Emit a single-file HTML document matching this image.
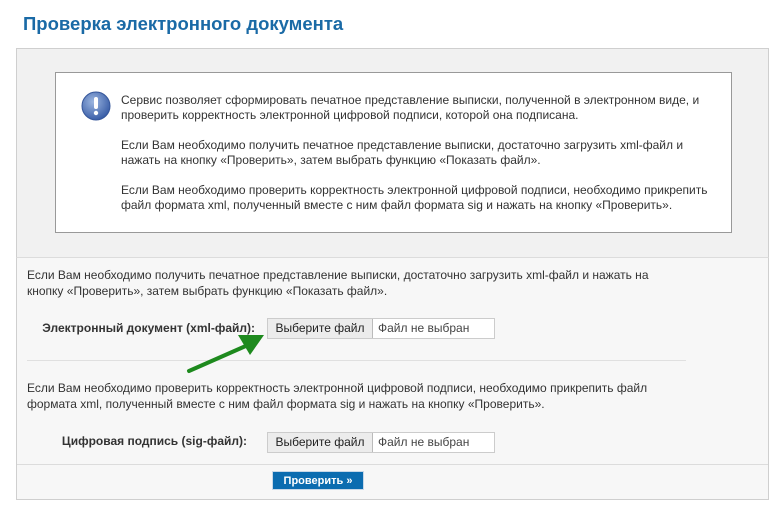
<!DOCTYPE html>
<html><head><meta charset="utf-8"><style>
body{margin:0;width:781px;height:529px;background:#fff;font-family:"Liberation Sans",Arial,sans-serif;font-size:12px;color:#333;position:relative;overflow:hidden}
.a{position:absolute;white-space:nowrap}
h1{position:absolute;left:23px;top:13px;margin:0;font-size:18.5px;font-weight:bold;color:#1a6aa6}
.panel{position:absolute;left:16px;top:48px;width:753px;height:452px;background:#f7f7f7;border:1px solid #cfcfcf;box-sizing:border-box}
.top{position:absolute;left:16px;top:48px;width:753px;height:210px;background:#f1f1f1;border:1px solid #cfcfcf;border-bottom:1px solid #dcdcdc;box-sizing:border-box}
.info{position:absolute;left:55px;top:72px;width:677px;height:161px;background:#fff;border:1px solid #999;box-sizing:border-box}
.fi{position:absolute;left:267px;width:228px;height:21px;border:1px solid #ccc;background:#fff;box-sizing:border-box;font-size:12px}
.fi b{position:absolute;left:0;top:0;width:104px;height:19px;background:#ececec;border-right:1px solid #bbb;font-weight:normal;line-height:19px;text-align:center;color:#222}
.fi span{position:absolute;left:110px;top:0;line-height:19px;color:#444}
.lbl{position:absolute;font-weight:bold;color:#333;text-align:right;white-space:nowrap}
</style></head><body>
<h1>Проверка электронного документа</h1>
<div class="panel"></div>
<div class="top"></div>
<div class="info"></div>
<svg class="a" style="left:81px;top:91px" width="30" height="30" viewBox="0 0 30 30"><defs><radialGradient id="g" cx="40%" cy="35%" r="65%"><stop offset="0" stop-color="#9cb6e0"/><stop offset="1" stop-color="#3b5fa8"/></radialGradient></defs><circle cx="15" cy="15" r="14" fill="url(#g)" stroke="#35569a"/><rect x="13" y="6" width="4" height="12" rx="2" fill="#fff"/><circle cx="15" cy="22" r="2.2" fill="#fff"/></svg>
<div class="a" style="left:121px;top:93px;line-height:15px">Сервис позволяет сформировать печатное представление выписки, полученной в электронном виде, и<br>проверить корректность электронной цифровой подписи, которой она подписана.</div>
<div class="a" style="left:121px;top:138px;line-height:15px">Если Вам необходимо получить печатное представление выписки, достаточно загрузить xml-файл и<br>нажать на кнопку «Проверить», затем выбрать функцию «Показать файл».</div>
<div class="a" style="left:121px;top:183px;line-height:15px">Если Вам необходимо проверить корректность электронной цифровой подписи, необходимо прикрепить<br>файл формата xml, полученный вместе с ним файл формата sig и нажать на кнопку «Проверить».</div>
<div class="a" style="left:27px;top:267px;line-height:16px">Если Вам необходимо получить печатное представление выписки, достаточно загрузить xml-файл и нажать на<br>кнопку «Проверить», затем выбрать функцию «Показать файл».</div>
<div class="lbl" style="right:526px;top:321px">Электронный документ (xml-файл):</div>
<div class="fi" style="top:318px"><b>Выберите файл</b><span>Файл не выбран</span></div>
<div class="a" style="left:27px;top:360px;width:659px;height:1px;background:#e0e0e0"></div>
<div class="a" style="left:27px;top:380px;line-height:16px">Если Вам необходимо проверить корректность электронной цифровой подписи, необходимо прикрепить файл<br>формата xml, полученный вместе с ним файл формата sig и нажать на кнопку «Проверить».</div>
<div class="lbl" style="right:534px;top:434px">Цифровая подпись (sig-файл):</div>
<div class="fi" style="top:432px"><b>Выберите файл</b><span>Файл не выбран</span></div>
<div class="a" style="left:17px;top:464px;width:751px;height:1px;background:#dcdcdc"></div>
<div class="a" style="left:272px;top:471px;width:92px;height:19px;background:#0b6cb0;color:#fff;font-weight:bold;font-size:11px;line-height:19px;text-align:center;border:1px solid #c8d8e8;box-sizing:border-box">Проверить »</div>
<svg class="a" style="left:180px;top:325px" width="100" height="55" viewBox="0 0 100 55"><line x1="9" y1="46" x2="68" y2="20" stroke="#1e8a1e" stroke-width="4" stroke-linecap="round"/><polygon points="84,10 58,10 70,30" fill="#1e8a1e"/></svg>
</body></html>
